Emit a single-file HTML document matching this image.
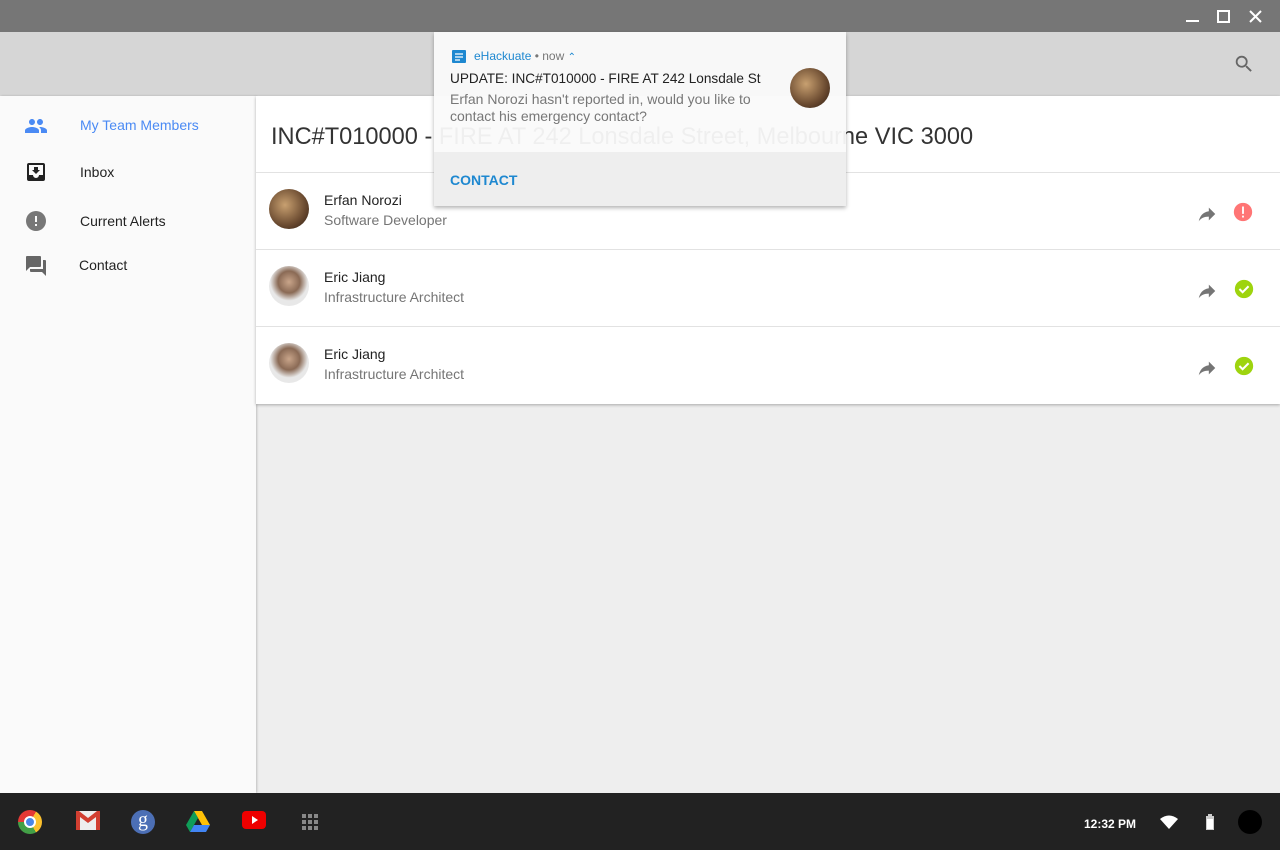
<!DOCTYPE html>
<html><head><style>
*{margin:0;padding:0;box-sizing:border-box}
body{width:1280px;height:850px;overflow:hidden;font-family:"Liberation Sans",Roboto,sans-serif;background:#eee;position:relative}
.abs{position:absolute}
.top{left:0;top:0;width:1280px;height:32px;background:#767676}
.hdr{left:0;top:32px;width:1280px;height:64px;background:#d6d6d6}
.side{left:0;top:96px;width:256px;height:697px;background:#fafafa;box-shadow:1px 0 2px rgba(0,0,0,.2)}
.card{left:256px;top:96px;width:1024px;height:308px;background:#fff;box-shadow:0 1px 3px rgba(0,0,0,.3)}
.nav{position:absolute;left:80px;font-size:14px;color:#222}
.row{position:absolute;left:0;width:1024px;height:77px;border-top:1px solid #e2e2e2}
.av{position:absolute;left:13px;top:16px;width:40px;height:40px;border-radius:50%}
.nm{position:absolute;left:68px;top:19px;font-size:14px;color:#222}
.rl{position:absolute;left:68px;top:39px;font-size:14px;color:#757575}
.task{left:0;top:793px;width:1280px;height:57px;background:#222}
.notif{left:434px;top:32px;width:412px;height:174px;background:rgba(250,250,250,.95);box-shadow:0 2px 4px rgba(0,0,0,.3)}
</style></head><body>
<div class="abs top">
<svg class="abs" style="left:1186px;top:10px" width="14" height="14"><path d="M0 11h13" stroke="#fff" stroke-width="2"/></svg>
<svg class="abs" style="left:1217px;top:10px" width="14" height="14"><rect x="1" y="1" width="11" height="11" fill="none" stroke="#fff" stroke-width="2"/></svg>
<svg class="abs" style="left:1249px;top:10px" width="14" height="14"><path d="M1 1l11 11M12 1L1 12" stroke="#fff" stroke-width="2"/></svg>
</div>
<div class="abs hdr">
<svg class="abs" style="left:1233px;top:21px" width="22" height="22" viewBox="0 0 24 24"><path fill="#666" d="M15.5 14h-.79l-.28-.27A6.470 6.470 0 0016 9.5 6.5 6.5 0 109.5 16c1.610 0 3.090-.59 4.230-1.57l.27.28v.79l5 4.990L20.490 19l-4.990-5zm-6 0C7.010 14 5 11.990 5 9.5S7.010 5 9.5 5 14 7.010 14 9.5 11.990 14 9.5 14z"/></svg>
</div>
<div class="abs side">
<svg class="abs" style="left:24px;top:18px" width="24" height="24" viewBox="0 0 24 24"><path fill="#4a8af4" d="M16 11c1.66 0 2.99-1.34 2.99-3S17.66 5 16 5c-1.66 0-3 1.34-3 3s1.34 3 3 3zm-8 0c1.66 0 2.99-1.34 2.99-3S9.66 5 8 5C6.34 5 5 6.34 5 8s1.34 3 3 3zm0 2c-2.33 0-7 1.17-7 3.5V19h14v-2.5c0-2.33-4.67-3.5-7-3.5zm8 0c-.29 0-.62.02-.97.05 1.16.84 1.97 1.97 1.97 3.45V19h6v-2.5c0-2.33-4.67-3.5-7-3.5z"/></svg>
<div class="nav" style="top:21px;color:#4a8af4">My Team Members</div>
<svg class="abs" style="left:24px;top:64px" width="24" height="24" viewBox="0 0 24 24"><path fill="#222" d="M19 3H5a2 2 0 00-2 2v14a2 2 0 002 2h14a2 2 0 002-2V5a2 2 0 00-2-2zm0 12h-4a3 3 0 01-6 0H5V5h14v10zm-3-5h-2V7h-4v3H8l4 4 4-4z"/></svg>
<div class="nav" style="top:68px">Inbox</div>
<svg class="abs" style="left:24px;top:113px" width="24" height="24" viewBox="0 0 24 24"><path fill="#777" d="M12 2a10 10 0 100 20 10 10 0 000-20zm1 15h-2v-2h2v2zm0-4h-2V7h2v6z"/></svg>
<div class="nav" style="top:117px">Current Alerts</div>
<svg class="abs" style="left:24px;top:158px" width="24" height="24" viewBox="0 0 24 24"><path fill="#666" d="M21 6h-2v9H6v2c0 .55.45 1 1 1h11l4 4V7c0-.55-.45-1-1-1zm-4 6V3c0-.55-.45-1-1-1H3c-.55 0-1 .45-1 1v14l4-4h10c.55 0 1-.45 1-1z"/></svg>
<div class="nav" style="top:161px;left:79px">Contact</div>
</div>
<div class="abs card">
<div class="abs" style="left:15px;top:28px;font-size:23.6px;color:#333">INC#T010000 - FIRE AT 242 Lonsdale Street, Melbourne VIC 3000</div>
<div class="row" style="top:76px"><div class="av" style="background:radial-gradient(circle at 40% 40%,#c8a070,#6a4a30 60%,#2a1a10)"></div><div class="nm">Erfan Norozi</div><div class="rl">Software Developer</div>
<svg class="abs" style="left:940px;top:30px" width="22" height="22" viewBox="0 0 24 24"><path fill="#757575" d="M14 9V5l7 7-7 7v-4.1c-5 0-8.5 1.6-11 5.1 1-5 4-10 11-11z"/></svg>
<svg class="abs" style="left:976px;top:28px" width="22" height="22" viewBox="0 0 24 24"><circle cx="12" cy="12" r="10" fill="#ff7575"/><path d="M11 6h2v8h-2zM11 16h2v2h-2z" fill="#fff"/></svg></div>
<div class="row" style="top:153px"><div class="av" style="background:radial-gradient(circle at 50% 40%,#c9a58a 0,#8a6a55 35%,#e8e8e8 60%)"></div><div class="nm">Eric Jiang</div><div class="rl">Infrastructure Architect</div>
<svg class="abs" style="left:940px;top:30px" width="22" height="22" viewBox="0 0 24 24"><path fill="#757575" d="M14 9V5l7 7-7 7v-4.1c-5 0-8.5 1.6-11 5.1 1-5 4-10 11-11z"/></svg>
<svg class="abs" style="left:977px;top:28px" width="22" height="22" viewBox="0 0 24 24"><circle cx="12" cy="12" r="10" fill="#9ed40e"/><path d="M7 12l3.5 3.5L17 9" stroke="#fff" stroke-width="2.2" fill="none"/></svg></div>
<div class="row" style="top:230px"><div class="av" style="background:radial-gradient(circle at 50% 40%,#c9a58a 0,#8a6a55 35%,#e8e8e8 60%)"></div><div class="nm">Eric Jiang</div><div class="rl">Infrastructure Architect</div>
<svg class="abs" style="left:940px;top:30px" width="22" height="22" viewBox="0 0 24 24"><path fill="#757575" d="M14 9V5l7 7-7 7v-4.1c-5 0-8.5 1.6-11 5.1 1-5 4-10 11-11z"/></svg>
<svg class="abs" style="left:977px;top:28px" width="22" height="22" viewBox="0 0 24 24"><circle cx="12" cy="12" r="10" fill="#9ed40e"/><path d="M7 12l3.5 3.5L17 9" stroke="#fff" stroke-width="2.2" fill="none"/></svg></div>
</div>
<div class="abs notif">
<div class="abs" style="left:0;top:120px;width:412px;height:54px;background:#eee"></div>
<svg class="abs" style="left:18px;top:18px" width="14" height="13"><rect width="14" height="13" rx="1" fill="#1e88d0"/><path d="M3 4h8M3 7h8M3 10h5" stroke="#fff" stroke-width="1.2"/></svg>
<div class="abs" style="left:40px;top:17px;font-size:12px;color:#1e88d0">eHackuate <span style="color:#777">• now</span> <span style="font-size:10px">⌃</span></div>
<div class="abs" style="left:16px;top:39px;font-size:13.6px;color:#222">UPDATE: INC#T010000 - FIRE AT 242 Lonsdale St</div>
<div class="abs" style="left:16px;top:59px;font-size:14px;color:#777;line-height:17px">Erfan Norozi hasn't reported in, would you like to<br>contact his emergency contact?</div>
<div class="abs" style="left:356px;top:36px;width:40px;height:40px;border-radius:50%;background:radial-gradient(circle at 40% 40%,#c8a070,#6a4a30 60%,#2a1a10)"></div>
<div class="abs" style="left:16px;top:140px;font-size:14px;color:#1e88d0;font-weight:bold">CONTACT</div>
</div>
<div class="abs task">
<div class="abs" style="left:18px;top:17px;width:24px;height:24px;border-radius:50%;background:conic-gradient(from 30deg,#fbc02d 0 120deg,#43a047 120deg 240deg,#e53935 240deg)"><div style="margin:6px;width:12px;height:12px;border-radius:50%;background:#4a86e8;border:2px solid #fff"></div></div>
<svg class="abs" style="left:76px;top:18px" width="24" height="19"><rect width="24" height="19" fill="#eee"/><path d="M0 0v19h4V6l8 6 8-6v13h4V0h-3l-9 7-9-7z" fill="#d23f31"/></svg>
<div class="abs" style="left:131px;top:17px;width:24px;height:24px;border-radius:50%;background:#4c6fb5;color:#fff;font-family:'Liberation Serif',serif;font-size:20px;text-align:center;line-height:20px">g</div>
<svg class="abs" style="left:186px;top:18px" width="24" height="21"><path d="M8 0h8l8 14h-8z" fill="#ffc107"/><path d="M8 0L0 14l4 7 8-14z" fill="#0f9d58"/><path d="M4 21h16l4-7H8z" fill="#4285f4"/></svg>
<svg class="abs" style="left:242px;top:18px" width="24" height="18"><rect width="24" height="18" rx="4" fill="#e00"/><path d="M10 5l6 4-6 4z" fill="#fff"/></svg>
<svg class="abs" style="left:302px;top:21px" width="16" height="16" fill="#888"><rect x="0" y="0" width="4" height="4"/><rect x="6" y="0" width="4" height="4"/><rect x="12" y="0" width="4" height="4"/><rect x="0" y="6" width="4" height="4"/><rect x="6" y="6" width="4" height="4"/><rect x="12" y="6" width="4" height="4"/><rect x="0" y="12" width="4" height="4"/><rect x="6" y="12" width="4" height="4"/><rect x="12" y="12" width="4" height="4"/></svg>
<div class="abs" style="left:1084px;top:24px;font-size:12px;font-weight:bold;color:#fff">12:32 PM</div>
<svg class="abs" style="left:1160px;top:22px" width="18" height="14"><path d="M0 4Q9-3 18 4L9 14z" fill="#fff"/></svg>
<svg class="abs" style="left:1206px;top:21px" width="8" height="16"><rect x="2" y="0" width="4" height="2" fill="#ccc"/><rect x="0" y="2" width="8" height="14" fill="#ccc"/><rect x="1" y="5" width="6" height="10" fill="#fff"/></svg>
<div class="abs" style="left:1238px;top:17px;width:24px;height:24px;border-radius:50%;background:#000"></div>
</div>
</body></html>
